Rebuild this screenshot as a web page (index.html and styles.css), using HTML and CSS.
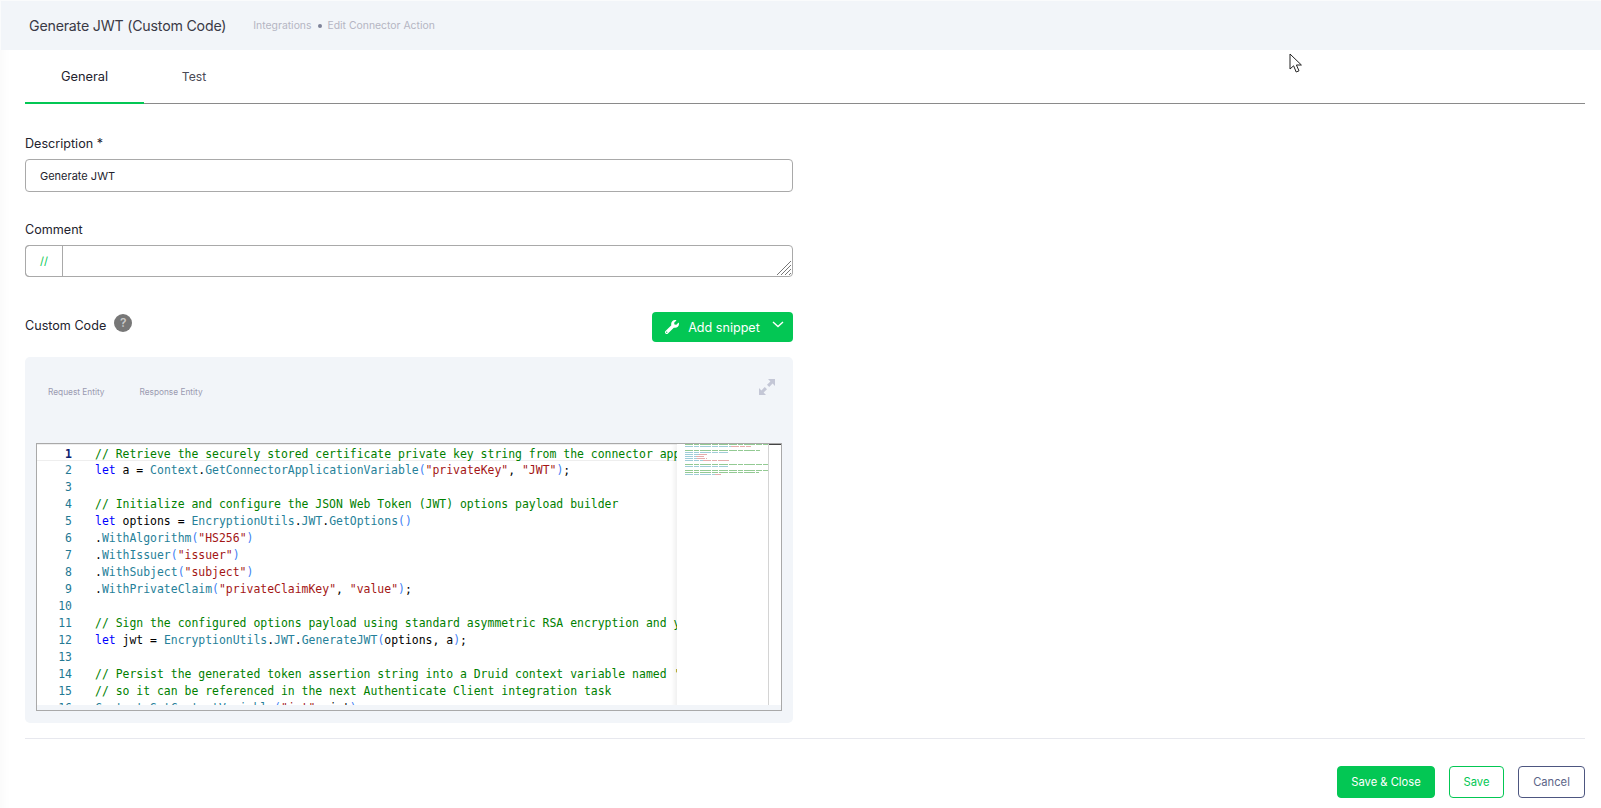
FILE: index.html
```html
<!DOCTYPE html>
<html lang="en">
<head>
    <meta charset="UTF-8">
    <title>Generate JWT (Custom Code)</title>
    <link rel="stylesheet" href="styles.css">
</head>
<body>

    <header class="page-header">
        <h1 class="page-title">Generate JWT (Custom Code)</h1>
        <div class="crumbs">
            <span>Integrations</span>
            <span class="crumb-dot"></span>
            <span>Edit Connector Action</span>
        </div>
    </header>

    <main class="content">
        <nav class="tabs">
            <a class="tab tab-active">General</a>
            <a class="tab tab-test">Test</a>
        </nav>

        <section class="form">
            <label class="field-label">Description *</label>
            <input class="text-input" type="text" value="Generate JWT">

            <label class="field-label label-comment">Comment</label>
            <div class="comment-box">
                <span class="comment-prefix">//</span>
                <textarea class="comment-input"></textarea>
                <svg class="resize-grip" width="16" height="16" viewBox="0 0 16 16">
                    <path d="M1 15 15 1M5 15 15 5M9 15 15 9M13 15 15 13" stroke="#777" stroke-width="1" fill="none"/>
                </svg>
            </div>

            <div class="code-head">
                <div class="code-title">
                    <span class="field-label">Custom Code</span>
                    <span class="help-icon">?</span>
                </div>
                <button class="snippet-btn">
                    <svg width="14" height="14" viewBox="0 0 512 512"><path fill="#fff" d="M507.73 109.1c-2.24-9.03-13.54-12.09-20.12-5.51l-74.36 74.36-67.88-11.31-11.31-67.88 74.36-74.36c6.62-6.62 3.43-17.9-5.66-20.16-47.38-11.74-99.55.91-136.58 37.93-39.64 39.64-50.55 97.1-34.05 147.2L18.74 402.76c-24.99 24.99-24.99 65.51 0 90.5 24.99 24.99 65.51 24.99 90.5 0l213.21-213.21c50.12 16.71 107.47 5.68 147.37-34.22 37.07-37.07 49.7-89.32 37.91-136.73zM64 472c-13.25 0-24-10.75-24-24 0-13.26 10.75-24 24-24s24 10.74 24 24c0 13.25-10.75 24-24 24z"/></svg>
                    <span>Add snippet</span>
                    <svg class="snippet-chevron" width="12" height="7" viewBox="0 0 12 7"><path d="M1 1 6 5.5 11 1" stroke="#fff" stroke-width="1.4" fill="none"/></svg>
                </button>
            </div>

            <div class="code-panel">
                <div class="panel-top">
                    <div class="entity-links">
                        <span>Request Entity</span>
                        <span>Response Entity</span>
                    </div>
                    <svg class="expand-icon" width="16" height="16" viewBox="0 0 16 16">
                        <path d="M9 0H16V7L13.6 4.6 10.2 8 8 5.8 11.4 2.4ZM7 16H0V9L2.4 11.4 5.8 8 8 10.2 4.6 13.6Z" fill="#c4c7d6"/>
                    </svg>
                </div>

                <div class="editor">
                    <div class="line line-current"><span class="ln">1</span><span class="code"><i class="c">// Retrieve the securely stored certificate private key string from the connector application</i></span></div>
                    <div class="line"><span class="ln">2</span><span class="code"><i class="k">let</i> a = <i class="t">Context</i>.<i class="t">GetConnectorApplicationVariable</i><i class="b">(</i><i class="s">"privateKey"</i>, <i class="s">"JWT"</i><i class="b">)</i>;</span></div>
                    <div class="line"><span class="ln">3</span><span class="code"></span></div>
                    <div class="line"><span class="ln">4</span><span class="code"><i class="c">// Initialize and configure the JSON Web Token (JWT) options payload builder</i></span></div>
                    <div class="line"><span class="ln">5</span><span class="code"><i class="k">let</i> options = <i class="t">EncryptionUtils</i>.<i class="t">JWT</i>.<i class="t">GetOptions</i><i class="b">()</i></span></div>
                    <div class="line"><span class="ln">6</span><span class="code">.<i class="t">WithAlgorithm</i><i class="b">(</i><i class="s">"HS256"</i><i class="b">)</i></span></div>
                    <div class="line"><span class="ln">7</span><span class="code">.<i class="t">WithIssuer</i><i class="b">(</i><i class="s">"issuer"</i><i class="b">)</i></span></div>
                    <div class="line"><span class="ln">8</span><span class="code">.<i class="t">WithSubject</i><i class="b">(</i><i class="s">"subject"</i><i class="b">)</i></span></div>
                    <div class="line"><span class="ln">9</span><span class="code">.<i class="t">WithPrivateClaim</i><i class="b">(</i><i class="s">"privateClaimKey"</i>, <i class="s">"value"</i><i class="b">)</i>;</span></div>
                    <div class="line"><span class="ln">10</span><span class="code"></span></div>
                    <div class="line"><span class="ln">11</span><span class="code"><i class="c">// Sign the configured options payload using standard asymmetric RSA encryption and yield a token</i></span></div>
                    <div class="line"><span class="ln">12</span><span class="code"><i class="k">let</i> jwt = <i class="t">EncryptionUtils</i>.<i class="t">JWT</i>.<i class="t">GenerateJWT</i><i class="b">(</i>options, a<i class="b">)</i>;</span></div>
                    <div class="line"><span class="ln">13</span><span class="code"></span></div>
                    <div class="line"><span class="ln">14</span><span class="code"><i class="c">// Persist the generated token assertion string into a Druid context variable named 'jwt'</i></span></div>
                    <div class="line"><span class="ln">15</span><span class="code"><i class="c">// so it can be referenced in the next Authenticate Client integration task</i></span></div>
                    <div class="line"><span class="ln">16</span><span class="code"><i class="t">Context</i>.<i class="t">SetContextVariable</i><i class="b">(</i><i class="s">"jwt"</i>, jwt<i class="b">)</i>;</span></div>

                    <svg class="minimap" width="104" height="266" viewBox="0 0 104 266">
                        <path class="mm-comment" d="M8 .5h83M8 6.5h75M8 20.5h83M8 26.5h83M8 28.5h74"/>
                        <path class="mm-token" d="M8 2.5h46M8 8.5h44M8 10.5h14M8 12.5h11M8 14.5h12M8 16.5h18M8 22.5h44M8 30.5h30"/>
                        <path class="mm-string" d="M54 2.5h20M22 10.5h8M19 12.5h9M20 14.5h10M26 16.5h26M38 30.5h6"/>
                    </svg>
                    <div class="scroll-gutter"></div>
                    <div class="scroll-strip"></div>
                </div>
            </div>
        </section>

        <div class="divider"></div>

        <footer class="actions">
            <button class="btn btn-primary">Save &amp; Close</button>
            <button class="btn btn-outline">Save</button>
            <button class="btn btn-cancel">Cancel</button>
        </footer>
    </main>

    <svg class="mouse-cursor" width="14" height="21" viewBox="0 0 14 21">
        <path d="M1 1V16L4.6 12.8 7.2 19 10 17.8 7.4 12H12.4Z" fill="#fff" stroke="#222" stroke-width="1"/>
    </svg>

</body>
</html>
```

FILE: styles.css
```css
* {
    margin: 0;
    padding: 0;
    box-sizing: border-box;
}

body {
    font-family: Inter, "Noto Sans", sans-serif;
    color: #2b2b36;
    background-color: #fff;
    height: 808px;
    overflow: hidden;
    position: relative;
}

.page-header {
    display: flex;
    align-items: center;
    height: 50px;
    padding-left: 28px;
    border-top: 1px solid #fafbfc;
    border-left: 1px solid #fafbfc;
    background-color: #f2f5f9;
}

.page-title {
    font-size: 14.2px;
    font-weight: 400;
    letter-spacing: -0.2px;
    color: #3a3a46;
}

.crumbs {
    display: flex;
    align-items: center;
    margin-left: 27px;
    font-size: 10.4px;
    color: #b5b5c3;
}

.crumb-dot {
    width: 4px;
    height: 4px;
    margin: 0 6px;
    border-radius: 50%;
    background-color: #7e8299;
}

.content {
    height: 758px;
    padding: 0 16px 0 25px;
    box-shadow: inset 14px 0 12px -12px rgba(0, 0, 0, 0.03);
}

.tabs {
    display: flex;
    height: 54px;
    border-bottom: 1px solid #8a8a8a;
}

.tab {
    display: flex;
    align-items: center;
    justify-content: center;
    height: 54px;
    font-size: 12.2px;
    padding-bottom: 2px;
}

.tab-active {
    width: 119px;
    padding-bottom: 0;
    font-size: 12.8px;
    color: #23232e;
    border-bottom: 2px solid #03c754;
}

.tab-test {
    width: 100px;
    color: #4a4a56;
}

.form {
    width: 768px;
}

.field-label {
    display: block;
    font-size: 12.6px;
    line-height: 18px;
    color: #23232e;
}

.form > .field-label:first-child {
    margin-top: 31px;
    margin-bottom: 6px;
}

.text-input {
    display: block;
    width: 100%;
    height: 33px;
    padding: 0 14px;
    border: 1px solid #a9a9a9;
    border-radius: 4px;
    font-family: inherit;
    font-size: 11px;
    color: #23232e;
    outline: none;
}

.label-comment {
    margin-top: 29px;
    margin-bottom: 6px;
}

.comment-box {
    display: flex;
    position: relative;
    height: 32px;
    border: 1px solid #a9a9a9;
    border-radius: 4px;
}

.comment-prefix {
    width: 38px;
    margin: -1px 0 -1px -1px;
    border: 1px solid #a9a9a9;
    border-radius: 4px 0 0 4px;
    text-align: center;
    line-height: 30px;
    font-size: 11px;
    color: #03c754;
}

.comment-input {
    flex: 1;
    border: none;
    outline: none;
    resize: none;
    background: transparent;
}

.resize-grip {
    position: absolute;
    right: 0;
    bottom: 0;
}

.code-head {
    display: flex;
    justify-content: space-between;
    align-items: flex-start;
    height: 30px;
    margin-top: 35px;
}

.code-title {
    display: flex;
    align-items: flex-start;
    gap: 8px;
    padding-top: 5px;
}

.help-icon {
    width: 18px;
    height: 18px;
    margin-top: -3px;
    border-radius: 50%;
    background-color: #777;
    color: #c9c9c9;
    font-size: 12px;
    font-weight: 600;
    line-height: 18px;
    text-align: center;
}

.snippet-btn {
    display: flex;
    align-items: center;
    justify-content: center;
    gap: 9px;
    width: 141px;
    height: 30px;
    padding-left: 4px;
    border: none;
    border-radius: 4px;
    background-color: #03c754;
    color: #fff;
    font-family: inherit;
    font-size: 12.6px;
}

.snippet-chevron {
    margin-left: 3px;
    margin-bottom: 5px;
}

.code-panel {
    height: 366px;
    margin-top: 15px;
    padding: 0 11px;
    border-radius: 5px;
    background-color: #f2f5f9;
}

.panel-top {
    display: flex;
    justify-content: space-between;
    height: 86px;
    padding: 22px 7px 0 12px;
}

.entity-links {
    display: flex;
    gap: 35px;
    padding-top: 7px;
    font-size: 8.3px;
    line-height: 12px;
    color: #9a9ab0;
}

.editor {
    position: relative;
    height: 268px;
    overflow: hidden;
    border: 1px solid #a9a9a9;
    background-color: #fff;
    font-family: "DejaVu Sans Mono", monospace;
    font-size: 11.44px;
    color: #000;
}

.line {
    display: flex;
    height: 17px;
    line-height: 19px;
    white-space: pre;
}

.line-current {
    border-top: 1px solid #eee;
    border-bottom: 1px solid #eee;
    line-height: 18px;
}

.ln {
    width: 35px;
    flex-shrink: 0;
    text-align: right;
    color: #237893;
}

.line-current .ln {
    color: #0b216f;
    font-weight: 700;
}

.code {
    margin-left: 23px;
}

.code i {
    font-style: normal;
}

.c { color: #008000; }
.k { color: #0000ff; }
.t { color: #267f99; }
.s { color: #a31515; }
.b { color: #3f7ff5; }

.minimap {
    position: absolute;
    top: 0;
    left: 640px;
    width: 104px;
    height: 266px;
    background-color: #fff;
    box-shadow: -3px 0 4px rgba(0, 0, 0, 0.06);
}

.minimap path {
    fill: none;
    stroke-width: 1;
    stroke-dasharray: 8 1 5 1 11 1 6 1 9 1;
    opacity: 0.75;
}

.mm-comment { stroke: #6fb86f; }
.mm-token { stroke: #7fbccb; }
.mm-string { stroke: #dc9090; }

.scroll-gutter {
    position: absolute;
    top: 0;
    right: 12px;
    width: 1px;
    height: 100%;
    background-color: #d4d4d4;
}

.scroll-gutter::after {
    content: "";
    position: absolute;
    top: 0;
    left: 1px;
    width: 12px;
    height: 1px;
    background-color: #444;
}

.scroll-strip {
    position: absolute;
    left: 0;
    right: 0;
    bottom: 0;
    height: 5px;
    background-color: #f2f5f9;
}

.divider {
    width: 100%;
    height: 1px;
    margin-top: 15px;
    background-color: #e7e8ee;
}

.actions {
    display: flex;
    justify-content: flex-end;
    gap: 14px;
    margin-top: 27px;
}

.btn {
    height: 32px;
    border-radius: 4px;
    font-family: inherit;
    font-size: 11.2px;
    background-color: #fff;
}

.btn-primary {
    width: 98px;
    border: 1px solid #03c754;
    background-color: #03c754;
    color: #fff;
}

.btn-outline {
    width: 55px;
    border: 1px solid #03c754;
    color: #03c754;
}

.btn-cancel {
    width: 67px;
    border: 1px solid #4d5680;
    color: #5c6488;
}

.mouse-cursor {
    position: absolute;
    top: 53px;
    left: 1289px;
}
```
